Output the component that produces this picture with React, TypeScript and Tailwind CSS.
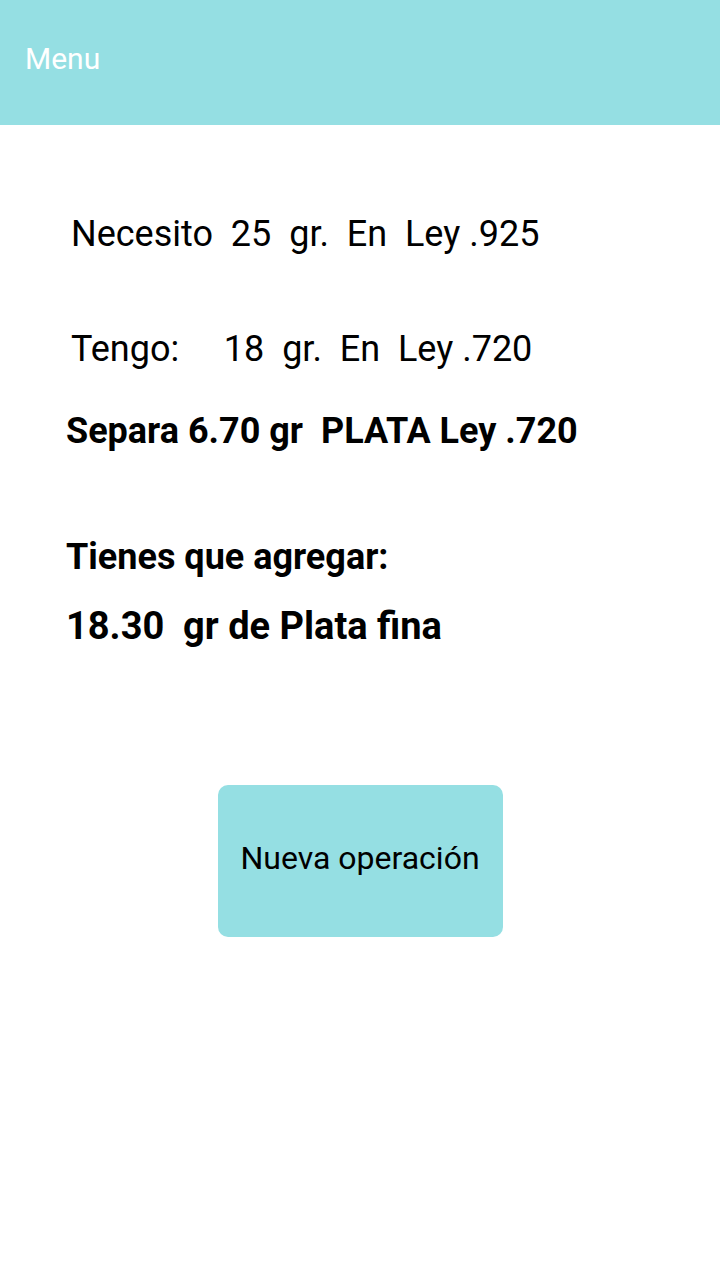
export default function App() {
  return (
    <div className="min-h-[1280px] w-[720px] bg-white font-['Roboto',sans-serif] text-black">
      <header className="flex h-[125px] items-center bg-[#95dfe3] px-[25px] pb-[8px]">
        <span className="text-[30px] text-white">Menu</span>
      </header>

      <main className="flex flex-col">
        <div className="mt-[88px] pl-[71px] text-[36px] leading-[42px] whitespace-pre">
          Necesito  25  gr.  En  Ley .925
        </div>
        <div className="mt-[73px] pl-[71px] text-[36px] leading-[42px] whitespace-pre">
          Tengo:     18  gr.  En  Ley .720
        </div>
        <div className="mt-[40px] pl-[66px] text-[36px] font-bold leading-[42px] whitespace-pre">
          Separa 6.70 gr  PLATA Ley .720
        </div>
        <div className="mt-[84px] pl-[66px] text-[36px] font-bold leading-[42px]">
          Tienes que agregar:
        </div>
        <div className="mt-[27px] pl-[66px] text-[38px] font-bold leading-[42px] whitespace-pre">
          18.30  gr de Plata fina
        </div>

        <div className="mt-[138px] flex justify-center">
          <button className="h-[152px] w-[285px] rounded-[10px] bg-[#95dfe3] pb-[6px] text-[32px]">
            Nueva operación
          </button>
        </div>
      </main>
    </div>
  );
}
